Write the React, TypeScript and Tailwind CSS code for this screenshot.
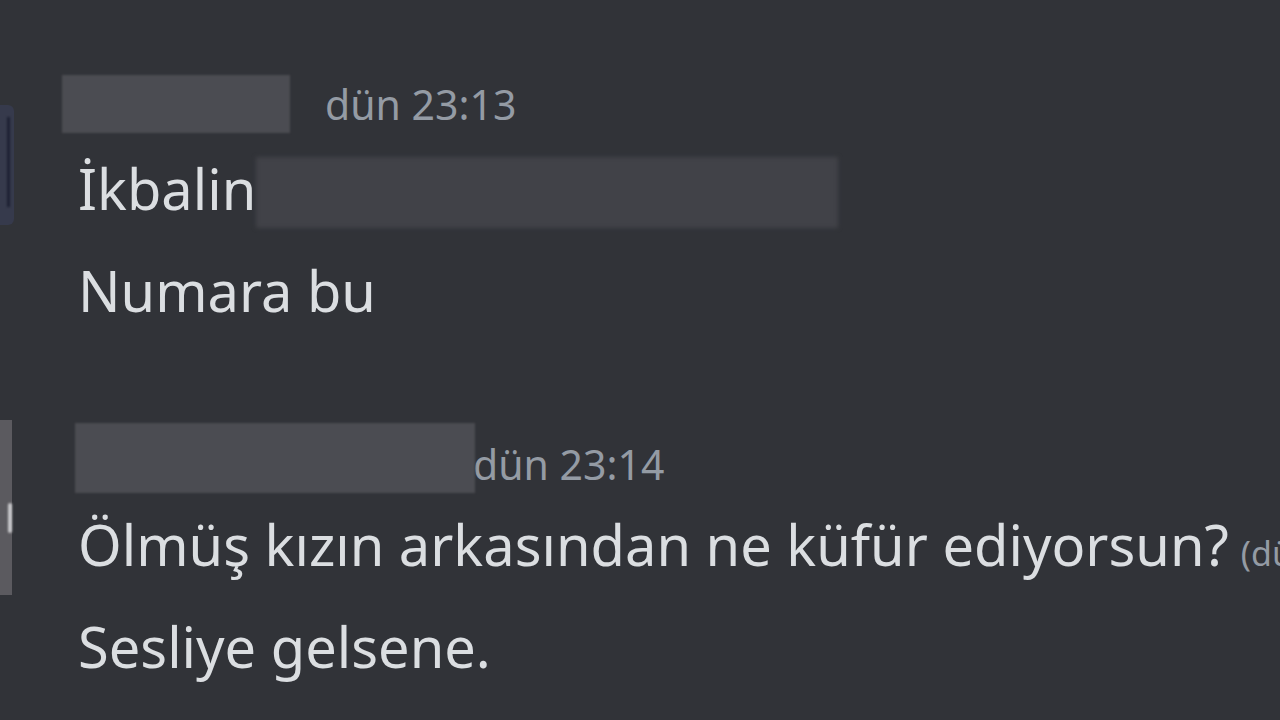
export default function App() {
  return (
    <div className="w-[1280px] h-[720px] overflow-hidden bg-[#313338] text-[#dbdee1] font-['Noto_Sans',sans-serif] pt-[75px]">
      {/* first message */}
      <div className="flex">
        <div className="w-[14px] h-[120px] mt-[30px] rounded-r-[6px] bg-[#363a4c] shrink-0 flex justify-end">
          <div className="w-[3px] h-[90px] mt-[12px] mr-[4px] bg-[#1d2133] blur-[1px]" />
        </div>
        <div className="flex flex-col ml-[48px]">
          <div className="flex items-center h-[58px]">
            <div className="w-[228px] h-[58px] bg-[#4b4c52] blur-[1px]" />
            <span className="ml-[35px] text-[41px] leading-[58px] text-[#949ba4]">dün 23:13</span>
          </div>
          <div className="flex items-start mt-[4px] h-[102px]">
            <span className="pl-[16px] text-[56px] leading-[102px]">İkbalin</span>
            <div className="mt-[20px] w-[582px] h-[71px] bg-[#414248] blur-[2px]" />
          </div>
          <div className="pl-[16px] text-[56px] leading-[102px]">Numara bu</div>
        </div>
      </div>

      {/* second message */}
      <div className="flex mt-[82px]">
        <div className="w-[12px] h-[175px] -mt-[3px] bg-[#5b5a5f] shrink-0 flex flex-col justify-center items-end">
          <div className="w-[4px] h-[30px] mt-[20px] bg-[#c9c9cc] blur-[1px] rounded-full" />
        </div>
        <div className="flex flex-col ml-[63px]">
          <div className="flex items-end h-[70px]">
            <div className="w-[400px] h-[70px] bg-[#4b4c52] blur-[1px]" />
            <span className="-ml-[2px] text-[41px] leading-[58px] text-[#949ba4]">dün 23:14</span>
          </div>
          <div className="flex items-baseline whitespace-nowrap h-[102px]">
            <span className="pl-[3px] text-[56px] leading-[102px]">Ölmüş kızın arkasından ne küfür ediyorsun?</span>
            <span className="ml-[12px] text-[34px] text-[#949ba4]">(düzenlendi)</span>
          </div>
          <div className="pl-[3px] text-[56px] leading-[102px]">Sesliye gelsene.</div>
        </div>
      </div>
    </div>
  );
}
